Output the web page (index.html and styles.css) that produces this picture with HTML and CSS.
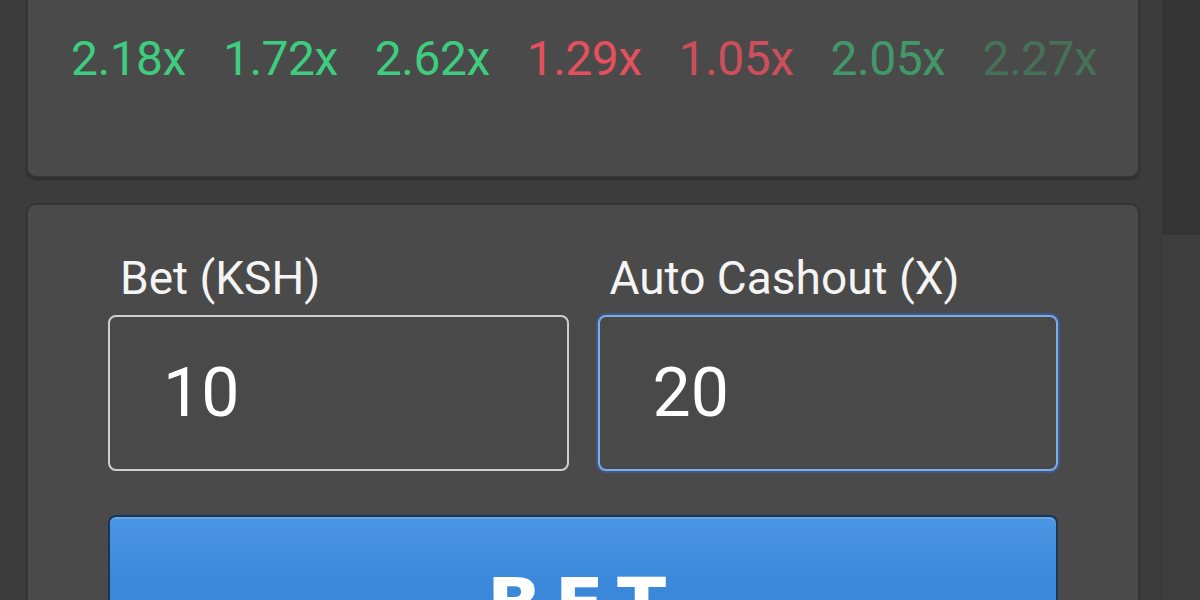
FILE: index.html
```html
<!DOCTYPE html>
<html>
<head>
  <link rel="stylesheet" href="styles.css">
</head>
<body>
  <div class="screen">
    <div class="feed">
      <section class="card history">
        <div class="multipliers">
          <span class="mult win">2.18x</span>
          <span class="mult win">1.72x</span>
          <span class="mult win">2.62x</span>
          <span class="mult loss">1.29x</span>
          <span class="mult loss fade-1">1.05x</span>
          <span class="mult win fade-2">2.05x</span>
          <span class="mult win fade-3">2.27x</span>
        </div>
      </section>

      <section class="card bet-panel">
        <div class="fields">
          <label class="field">
            <span class="field-label">Bet (KSH)</span>
            <input class="field-input" type="text" value="10">
          </label>
          <label class="field">
            <span class="field-label">Auto Cashout (X)</span>
            <input class="field-input focused" type="text" value="20">
          </label>
        </div>
        <button class="bet-button">BET</button>
      </section>
    </div>

    <div class="scrollbar">
      <div class="scroll-thumb"></div>
    </div>
  </div>
</body>
</html>
```

FILE: styles.css
```css
body {
  margin: 0;
  background: #3c3c3c;
  font-family: Roboto, "Noto Sans", sans-serif;
  color: #fff;
  overflow: hidden;
}

.screen {
  display: flex;
  height: 600px;
  overflow: hidden;
}

.feed {
  width: 1114px;
  padding-left: 26px;
  flex: none;
}

.card {
  background: #4a4a4a;
  border: 2px solid #353535;
  border-radius: 10px;
  box-shadow: 0 2px 2px rgba(0,0,0,0.25);
}

/* history strip, scrolled partly off the top */
.history {
  margin-top: -30px;
  padding: 63px 43px 93px;
}

.multipliers {
  display: flex;
  gap: 37px;
}

.mult {
  font-size: 48px;
  line-height: 1;
  letter-spacing: -0.5px;
}

.mult.win {
  color: #3ecd7e;
}

.mult.loss {
  color: #e4505e;
}

.mult.fade-1 {
  opacity: 0.85;
}

.mult.fade-2 {
  opacity: 0.6;
}

.mult.fade-3 {
  opacity: 0.3;
}

/* bet panel */
.bet-panel {
  margin-top: 25px;
  padding: 50px 80px 0;
}

.fields {
  display: grid;
  grid-template-columns: 1fr 1fr;
  gap: 29px;
}

.field {
  display: flex;
  flex-direction: column;
}

.field-label {
  font-size: 46px;
  line-height: 1;
  margin: 0 0 14px 12px;
  color: #f4f4f4;
}

.field-input {
  box-sizing: border-box;
  width: 100%;
  height: 156px;
  padding: 0 0 0 53px;
  background: #494949;
  border: 2px solid #cfcfcf;
  border-radius: 8px;
  color: #fff;
  font-family: Roboto, sans-serif;
  font-size: 68px;
  outline: none;
}

.field-input.focused {
  border-color: #80aae2;
  box-shadow: 0 0 0 2px #3d5a8c;
}

.bet-button {
  display: block;
  box-sizing: border-box;
  width: 100%;
  height: 130px;
  margin-top: 44px;
  padding: 48px 0 0;
  background: linear-gradient(#4b97e4, #3b88db 50%, #3a85d8);
  border: 2px solid #1d3452;
  border-radius: 8px;
  box-shadow: inset 0 2px 0 #64a7ec;
  color: #fff;
  font-family: "DejaVu Sans", sans-serif;
  font-weight: bold;
  font-size: 72px;
  line-height: 1;
  letter-spacing: 13px;
  text-align: center;
}

/* right-hand scroll track */
.scrollbar {
  width: 38px;
  margin-left: 22px;
  flex: none;
  background: #343434;
  padding-top: 235px;
  box-sizing: border-box;
}

.scroll-thumb {
  height: 100%;
  margin-left: -2px;
  background: #3e3e3e;
  border-left: 2px solid #393939;
}
```
